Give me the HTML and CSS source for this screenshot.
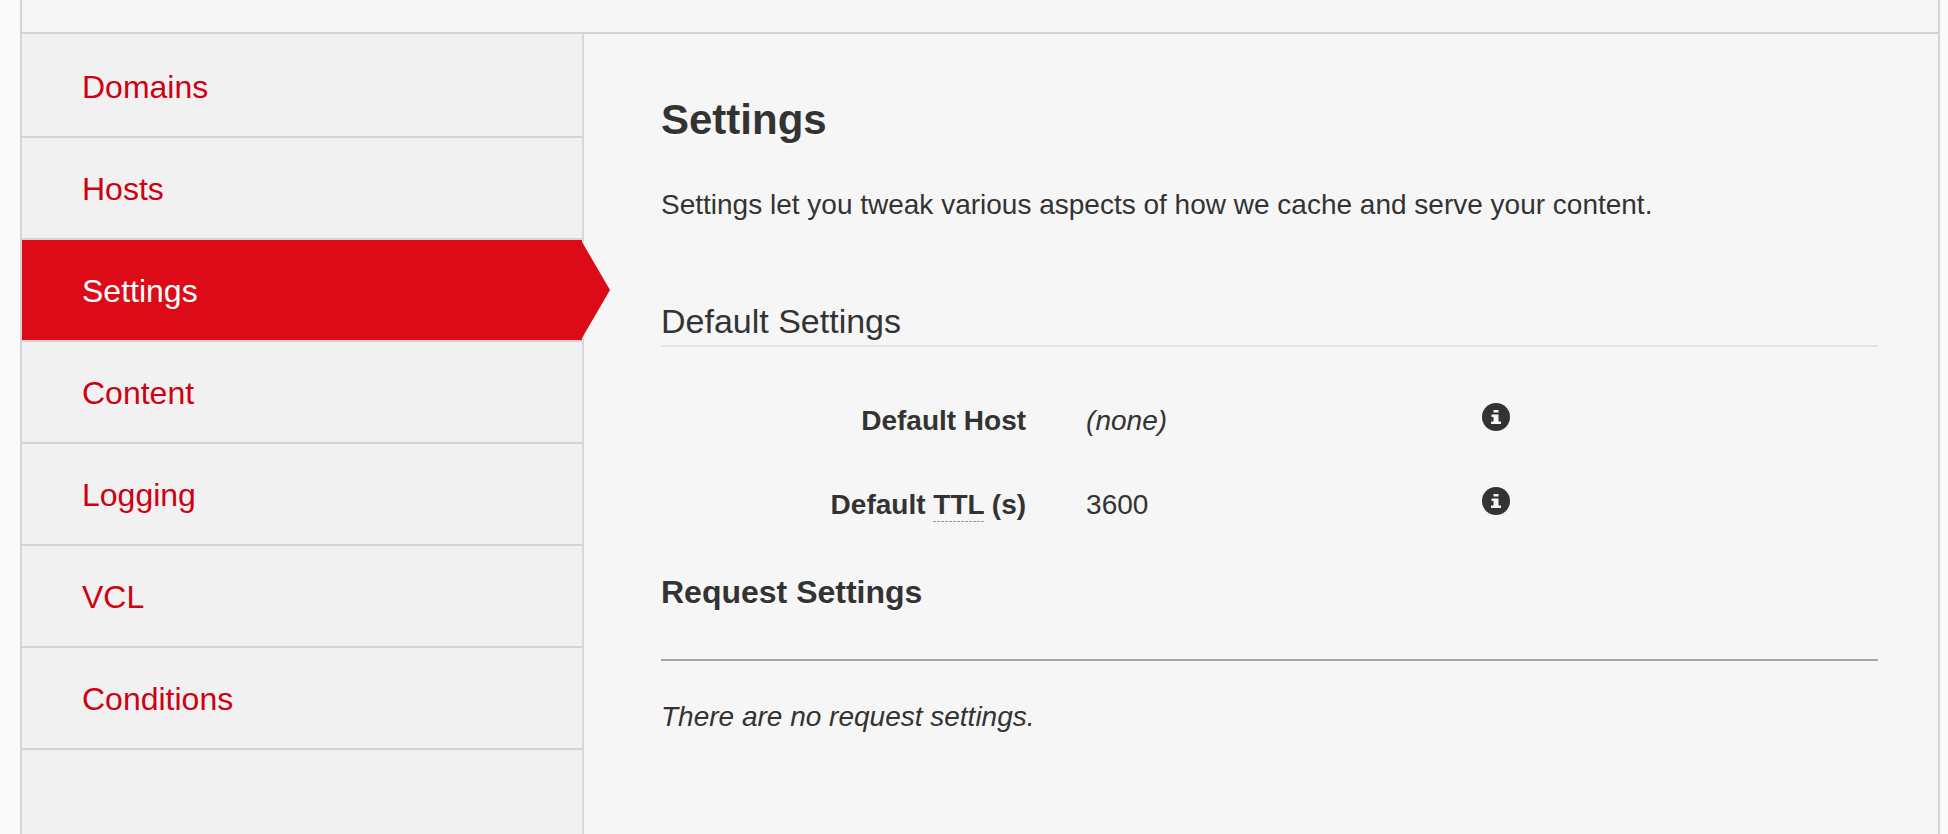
FILE: index.html
```html
<!DOCTYPE html>
<html lang="en">
<head>
<meta charset="utf-8">
<meta name="viewport" content="width=device-width, initial-scale=1">
<title>Settings</title>
<link rel="stylesheet" href="styles.css">
</head>
<body>
<svg class="sprite" aria-hidden="true">
  <symbol id="info" viewBox="0 0 28 28">
    <circle cx="14" cy="14" r="14" fill="#333"/>
    <path d="M11.500 7h5v2.500h-5zM9.500 11.500h7v7h2.500v2.500H9v-2.500h2.500v-4.500h-2z" fill="#f6f6f6"/>
  </symbol>
</svg>
<div class="panel">
  <div class="panel-top"></div>
  <div class="columns">
    <nav class="sidebar" aria-label="Configuration">
      <ul class="menu">
        <li><a class="menu-link" href="#domains">Domains</a></li>
        <li><a class="menu-link" href="#hosts">Hosts</a></li>
        <li><a class="menu-link active" href="#settings" aria-current="page">Settings</a></li>
        <li><a class="menu-link" href="#content">Content</a></li>
        <li><a class="menu-link" href="#logging">Logging</a></li>
        <li><a class="menu-link" href="#vcl">VCL</a></li>
        <li><a class="menu-link" href="#conditions">Conditions</a></li>
      </ul>
    </nav>
    <main class="content">
      <h1 class="title">Settings</h1>
      <p class="intro">Settings let you tweak various aspects of how we cache and serve your content.</p>
      <h2 class="section-title">Default Settings</h2>
      <div class="fields">
        <div class="field">
          <span class="label">Default Host</span>
          <span class="value"><em>(none)</em></span>
          <button class="info" type="button" aria-label="About Default Host"><svg class="icon"><use href="#info"/></svg></button>
        </div>
        <div class="field">
          <span class="label">Default <abbr class="term" title="Time to live">TTL</abbr> (s)</span>
          <span class="value">3600</span>
          <button class="info" type="button" aria-label="About Default TTL"><svg class="icon"><use href="#info"/></svg></button>
        </div>
      </div>
      <h2 class="request-title">Request Settings</h2>
      <p class="empty">There are no request settings.</p>
    </main>
  </div>
</div>
</body>
</html>
```

FILE: styles.css
```css
* {
  box-sizing: border-box;
}

body {
  margin: 0;
  background: #fafafa;
  color: #333;
  font: 28px/40px "Liberation Sans", Arial, sans-serif;
}

.sprite {
  display: none;
}

.panel {
  display: flex;
  flex-direction: column;
  min-height: 100vh;
  margin: 0 8px 0 20px;
  border: solid #d4d4d4;
  border-width: 0 2px;
  background: #f6f6f6;
}

.panel-top {
  height: 34px;
  border-bottom: 2px solid #d4d4d4;
}

.columns {
  display: grid;
  flex: 1;
  grid-template-columns: 562px 1fr;
}

.sidebar {
  border-right: 2px solid #d8d8d8;
  background: #f1f1f1;
}

.menu {
  margin: 0;
  padding: 2px 0 0;
  list-style: none;
}

.menu-link {
  display: block;
  position: relative;
  padding: 31px 60px 29px;
  border-bottom: 2px solid #d4d4d4;
  color: #d00013;
  font-size: 32px;
  text-decoration: none;
}

.active {
  background: #dd0b17;
  background-clip: padding-box;
  color: #fff;
}

.active::after {
  content: "";
  position: absolute;
  top: 2px;
  bottom: 2px;
  left: 100%;
  width: 28px;
  background: #dd0b17;
  clip-path: polygon(0 0, 100% 50%, 0 100%);
}

.content {
  padding: 61px 60px 60px 77px;
}

.title {
  margin: 0 0 40px;
  font-size: 42px;
  line-height: 50px;
}

.title,
.request-title {
  text-shadow: 0 2px 0 #fff;
}

.intro {
  margin: 0;
}

.section-title {
  margin: 76px 0 54px;
  padding-bottom: 4px;
  border-bottom: 2px solid #e5e5e5;
  font-size: 34px;
  font-weight: 400;
}

.fields {
  display: grid;
  gap: 44px;
}

.field {
  display: grid;
  grid-template-columns: 30% minmax(0, 336px) 28px;
  column-gap: 60px;
}

.label {
  font-weight: 700;
  text-align: right;
}

.term {
  padding-bottom: 2px;
  background: repeating-linear-gradient(90deg, #999 0 3px, transparent 3px 4px) bottom / 100% 1px no-repeat;
  text-decoration: none;
}

.info {
  width: 28px;
  height: 28px;
  margin: 2px 0;
  padding: 0;
  border: 0;
  background: none;
  cursor: pointer;
}

.icon {
  display: block;
  width: 28px;
  height: 28px;
}

.request-title {
  margin: 47px 0 36px;
  padding-bottom: 47px;
  border-bottom: 2px solid #a4a4a4;
  font-size: 32px;
}

.empty {
  margin: 0;
  font-style: italic;
}
```
